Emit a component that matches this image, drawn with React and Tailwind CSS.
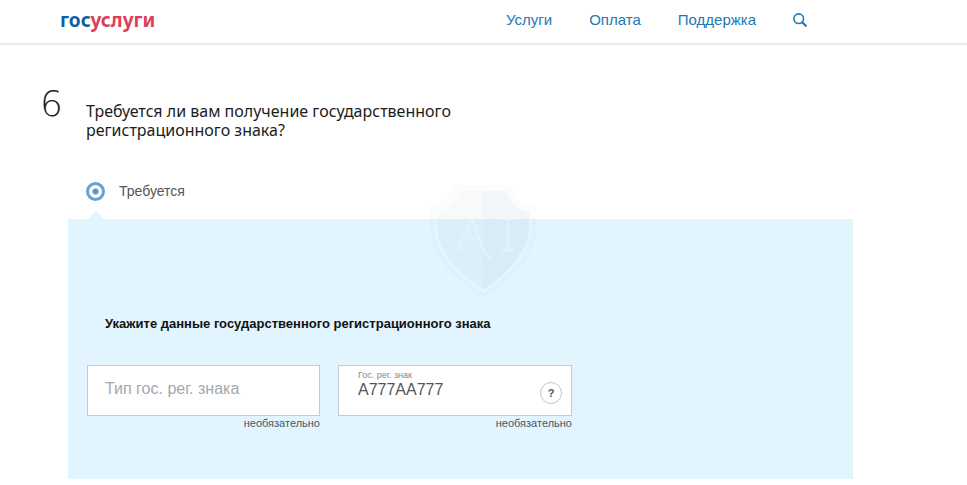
import { useState } from "react";

const navItems = [
  { label: "Услуги", href: "#services" },
  { label: "Оплата", href: "#payment" },
  { label: "Поддержка", href: "#support" },
];

function SearchIcon() {
  return (
    <svg width="14" height="14" viewBox="0 0 14 14" fill="none" stroke="#2079b4">
      <circle cx="5.7" cy="5.7" r="4.8" strokeWidth="1.6" />
      <path d="M9.3 9.3 12.8 12.8" strokeWidth="2.2" strokeLinecap="round" />
    </svg>
  );
}

function Header() {
  return (
    <header className="flex h-[45px] items-center justify-between border-b-2 border-[#ececec] pr-[160px] pb-1 pl-[60px]">
      <a
        href="#home"
        className="font-['Noto_Sans',sans-serif] text-[19px] leading-6 font-bold text-[#0f5fa6]"
      >
        гос<span className="text-[#dd3f59]">услуги</span>
      </a>
      <nav className="flex items-center gap-[37px]">
        {navItems.map((item) => (
          <a key={item.href} href={item.href} className="text-[15px] leading-5 text-[#2079b4]">
            {item.label}
          </a>
        ))}
        <button type="button" aria-label="Поиск" className="cursor-pointer">
          <SearchIcon />
        </button>
      </nav>
    </header>
  );
}

function Watermark() {
  return (
    <svg
      className="pointer-events-none absolute -top-9 left-[360px]"
      width="110"
      height="116"
      viewBox="0 0 110 116"
      fill="none"
      aria-hidden="true"
    >
      <path
        d="M26 2h58l2 8c6 8 13 13 22 14v24c-2 27-24 50-53 66C26 98 4 75 2 48V24c9-1 16-6 22-14z"
        fill="#8ea9b8"
        fillOpacity="0.03"
      />
      <path
        d="M31 7h48l3 8c5 8 11 12 20 14v19c-3 23-21 43-47 60C29 91 11 71 8 48V29c9-2 15-6 20-14z"
        fill="#8ea9b8"
        fillOpacity="0.03"
        stroke="#fff"
        strokeOpacity="0.3"
        strokeWidth="3"
      />
      <path d="M55 7v101c26-17 44-37 47-60V29c-9-2-15-6-20-14l-3-8z" fill="#8ea9b8" fillOpacity="0.03" />
      <g stroke="#fff" strokeOpacity="0.25">
        <path d="M29 67 44 36M36 55h16M24 67h10" strokeWidth="1.5" />
        <path d="M44 35c7 22 12 38 20 42M80 37v29M70 36h20M74 67h12" strokeWidth="2.5" />
      </g>
    </svg>
  );
}

export default function App() {
  const [plate, setPlate] = useState("А777АА777");

  return (
    <div className="bg-white font-['Liberation_Sans',sans-serif]">
      <Header />

      <main className="pt-10 pr-[114px] pb-1 pl-10">
        <div className="flex items-start">
          <span className="w-[46px] shrink-0 font-['DejaVu_Sans',sans-serif] text-[36px] leading-[38px] font-extralight text-[#222]">
            6
          </span>
          <h1 className="max-w-[400px] pt-[17px] font-['Noto_Sans',sans-serif] text-[16px] leading-[19px] text-[#1c1c1c]">
            Требуется ли вам получение государственного регистрационного знака?
          </h1>
        </div>

        <label className="mt-[41px] ml-[46px] flex w-fit cursor-pointer items-center gap-3.5 text-[14px] leading-5 text-[#555]">
          <input
            type="radio"
            name="plate-needed"
            defaultChecked
            className="size-[19px] appearance-none rounded-full border-3 border-[#66a3cc] bg-[radial-gradient(circle,#5793be_2px,#fff_4px)]"
          />
          Требуется
        </label>

        <section className="relative mt-[18px] ml-7 bg-[#e2f5fe] px-[19px] pt-[97px] pb-12">
          <div className="absolute -top-2 left-5 h-2 w-4 bg-[#e2f5fe] [clip-path:polygon(50%_0,100%_100%,0_100%)]" />

          <h2 className="pl-[18px] text-[13px] leading-4 font-bold text-[#111]">
            Укажите данные государственного регистрационного знака
          </h2>

          <div className="mt-[33px] flex gap-[18px]">
            <div className="w-[233px]">
              <input
                type="text"
                aria-label="Тип гос. рег. знака"
                placeholder="Тип гос. рег. знака"
                className="h-[51px] w-full border border-[#c3ccd1] bg-white px-[17px] pb-1 text-[16px] text-[#555] outline-none placeholder:text-[#a3a8b0]"
              />
              <p className="text-right text-[11px] leading-[15px] text-[#4a5760]">необязательно</p>
            </div>

            <div className="w-[234px]">
              <div className="flex h-[51px] items-center justify-between border border-[#c3ccd1] bg-white pr-[9px] pl-[19px]">
                <div className="flex min-w-0 flex-col pb-3">
                  <label htmlFor="plate" className="text-[9px] leading-[10px] text-[#888]">
                    Гос. рег. знак
                  </label>
                  <input
                    id="plate"
                    type="text"
                    value={plate}
                    onChange={(e) => setPlate(e.target.value)}
                    className="h-5 w-full bg-transparent text-[16px] leading-5 text-[#555] outline-none"
                  />
                </div>
                <button
                  type="button"
                  aria-label="Подсказка"
                  className="mt-1 size-[22px] shrink-0 cursor-pointer rounded-full border border-[#c4c4c4] text-[11px] leading-5 font-bold text-[#555]"
                >
                  ?
                </button>
              </div>
              <p className="text-right text-[11px] leading-[15px] text-[#4a5760]">необязательно</p>
            </div>
          </div>

          <Watermark />
        </section>
      </main>
    </div>
  );
}
